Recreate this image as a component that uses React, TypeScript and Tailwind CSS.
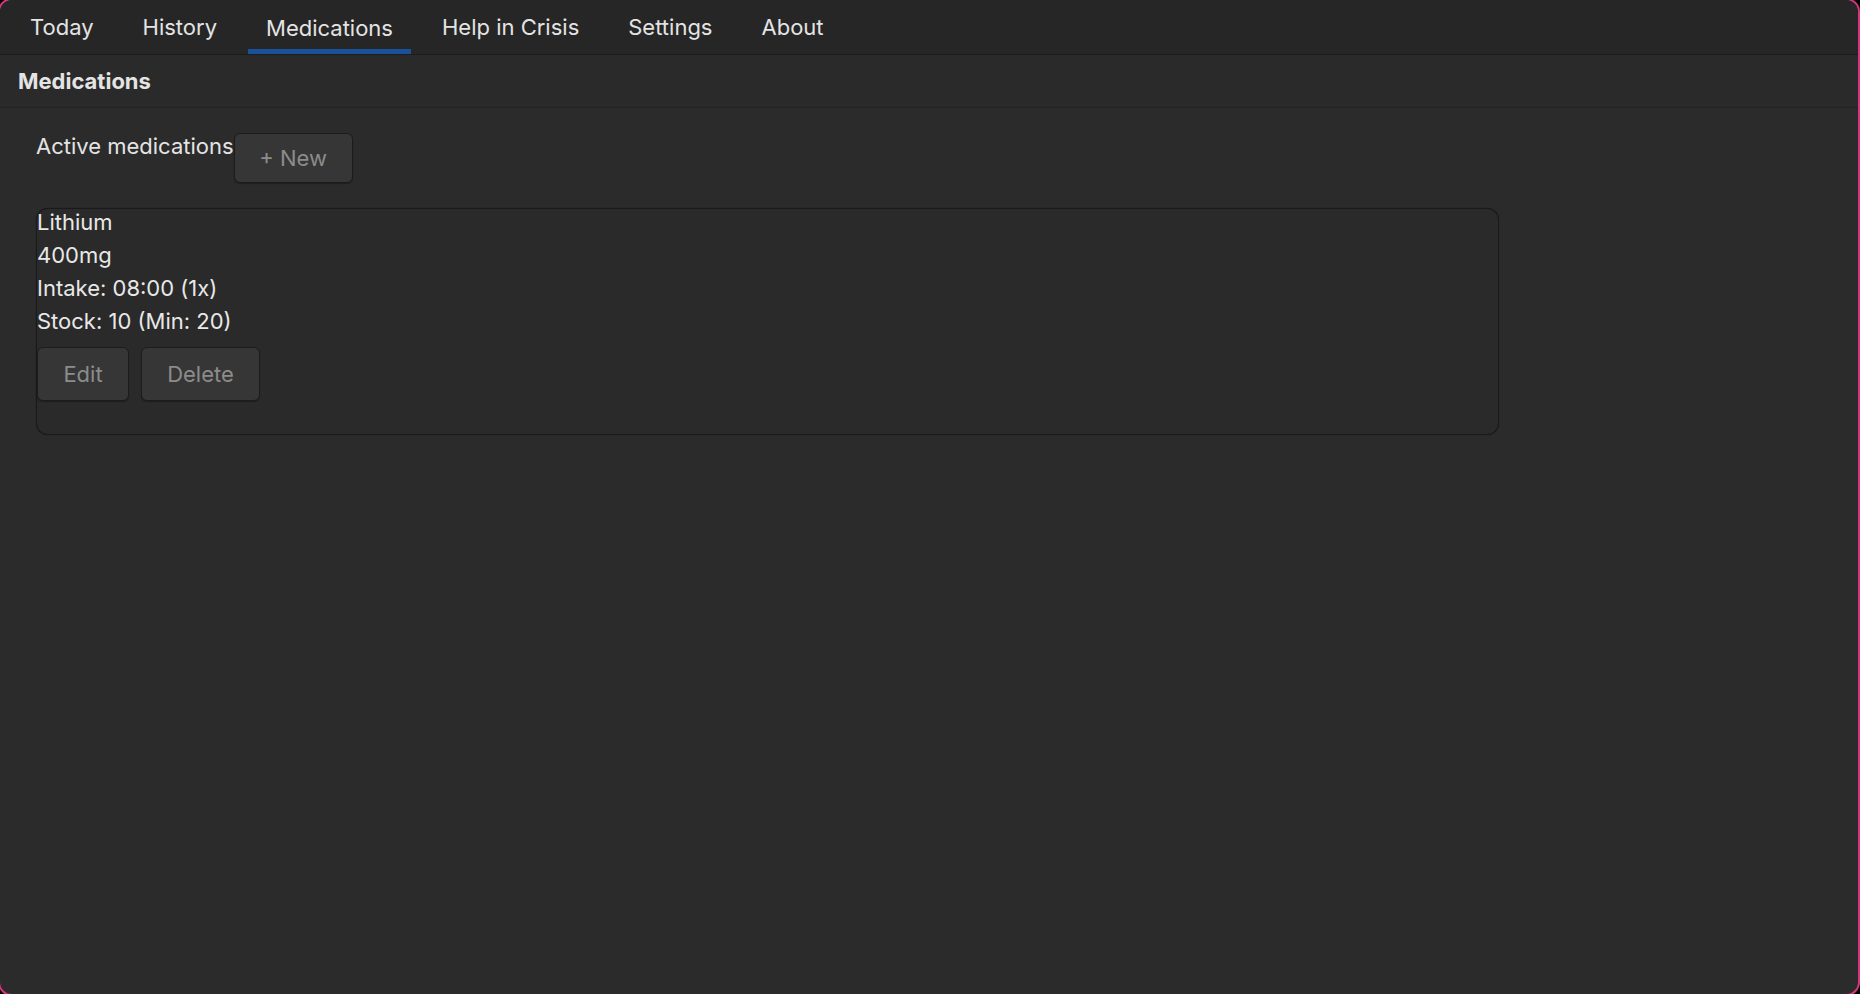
import React, { useState } from 'react';

const tabs = ['Today', 'History', 'Medications', 'Help in Crisis', 'Settings', 'About'];

type Medication = {
    name: string;
    dose: string;
    intake: string;
    stock: number;
    min: number;
};

const meds: Medication[] = [
    { name: 'Lithium', dose: '400mg', intake: '08:00 (1x)', stock: 10, min: 20 },
];

const App: React.FC = () => {
    const [active, setActive] = useState('Medications');

    return (
        <div className="w-[1860px] h-[994px] bg-black overflow-hidden" style={{ fontFamily: 'Inter, "Noto Sans", sans-serif' }}>
            <div className="-ml-[2px] -mt-[2px] w-[1862px] h-[998px] rounded-[14px] border-2 border-[#d8357f] bg-[#2b2b2b] overflow-hidden flex flex-col">
                {/* tab bar */}
                <div className="h-[55px] shrink-0 bg-[#262626] border-b border-[#1c1c1c] flex items-stretch gap-[13px] pl-[12px]">
                    {tabs.map((t) => (
                        <button
                            key={t}
                            onClick={() => setActive(t)}
                            className={`relative px-[18px] text-[22px] text-[#e4e4e4] flex items-center pt-[1px] ${active === t ? 'border-b-[5px] border-[#1a5299] pt-[7px]' : ''}`}
                        >
                            {t}
                        </button>
                    ))}
                </div>

                {/* header */}
                <div className="h-[53px] shrink-0 bg-[#2a2a2a] border-b border-[#222222] flex items-center pl-[18px]">
                    <h2 className="text-[22px] font-bold text-[#e4e4e4]">Medications</h2>
                </div>

                {/* content */}
                <div className="flex-1 pl-[36px] pt-[24px]">
                    <div className="flex items-start">
                        <span className="h-[28px] leading-[28px] text-[22px] text-[#e4e4e4]">Active medications</span>
                        <button className="mt-[1px] h-[50px] w-[119px] rounded-[6px] border border-[#1c1c1c] bg-[#363636] text-[22px] text-[#8c8c8c] shadow-[0_1px_1px_rgba(0,0,0,0.3)]">
                            + New
                        </button>
                    </div>

                    {meds.map((m) => (
                        <div key={m.name} className="mt-[25px] w-[1463px] rounded-[12px] border border-[#1a1a1a] bg-[#2a2a2a] pb-[33px] shadow-[0_0_1px_rgba(0,0,0,0.6)]">
                            <div className="flex flex-col gap-[9px] text-[22px] text-[#e8e8e8] leading-[24px] pt-[1px]">
                                <span>{m.name}</span>
                                <span>{m.dose}</span>
                                <span>Intake: {m.intake}</span>
                                <span>Stock: {m.stock} (Min: {m.min})</span>
                            </div>
                            <div className="mt-[14px] flex gap-[12px]">
                                <button className="h-[54px] w-[92px] rounded-[6px] border border-[#1c1c1c] bg-[#363636] text-[22px] text-[#8c8c8c] shadow-[0_1px_1px_rgba(0,0,0,0.3)]">
                                    Edit
                                </button>
                                <button className="h-[54px] w-[119px] rounded-[6px] border border-[#1c1c1c] bg-[#363636] text-[22px] text-[#8c8c8c] shadow-[0_1px_1px_rgba(0,0,0,0.3)]">
                                    Delete
                                </button>
                            </div>
                        </div>
                    ))}
                </div>
            </div>
        </div>
    );
};

export default App;
